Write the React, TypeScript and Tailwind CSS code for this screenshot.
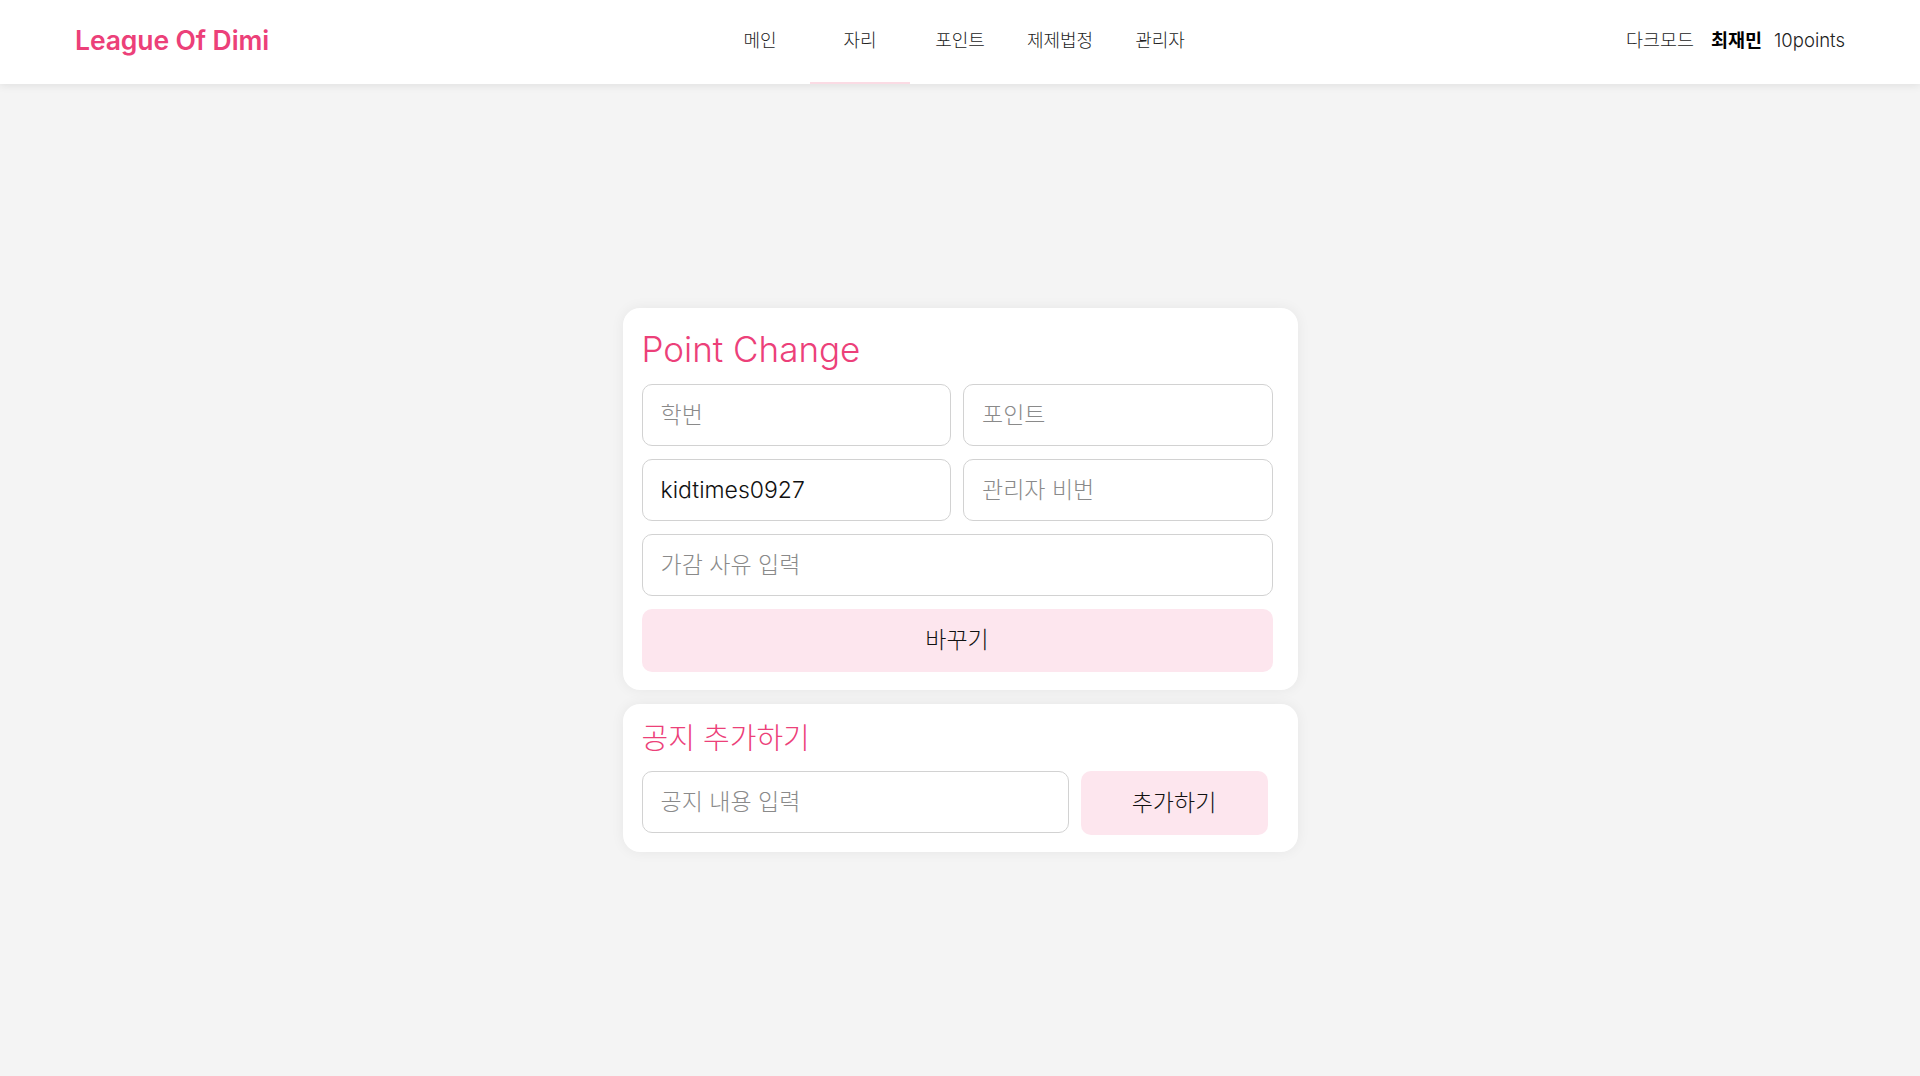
import React from "react";

const font = { fontFamily: 'Inter, "Noto Sans CJK KR", sans-serif' };

function Header() {
  const items = ["메인", "자리", "포인트", "제제법정", "관리자"];
  return (
    <header className="h-[84px] bg-white shadow-[0_2px_8px_rgba(0,0,0,0.08)] grid grid-cols-[1fr_auto_1fr] items-center px-[75px] relative z-10">
      <div className="text-[26.5px] font-semibold text-[#ec4079] tracking-[-0.1px] pb-[3px]">League Of Dimi</div>
      <nav className="flex h-full">
        {items.map((it) => (
          <div
            key={it}
            className={
              "w-[100px] h-full flex items-center justify-center text-[18px] font-light text-[#222] pb-[2px] border-b-2 " +
              (it === "자리" ? "border-[#fbdbe4]" : "border-transparent")
            }
          >
            {it}
          </div>
        ))}
      </nav>
      <div className="flex items-center justify-end text-[18.5px] text-[#222] pb-[3px]">
        <span className="font-light">다크모드</span>
        <span className="ml-[17px] font-bold text-black">최재민</span>
        <span className="ml-[12px] font-light">10points</span>
      </div>
    </header>
  );
}

function Input({ placeholder, value, className }: { placeholder: string; value?: string; className?: string }) {
  return (
    <input
      readOnly
      placeholder={placeholder}
      value={value ?? ""}
      className={
        "h-[62px] rounded-[10px] border border-[#d2d2d2] bg-white px-[18px] text-[23px] font-light text-[#111] placeholder:text-[#8a8a8a] outline-none " +
        (className ?? "")
      }
      style={font}
    />
  );
}

export default function App() {
  return (
    <div className="min-h-[1076px] flex flex-col bg-[#f4f4f4]" style={font}>
      <Header />
      <main className="flex-1 flex flex-col items-center justify-center">
        <div className="w-[675px] bg-white rounded-[17px] shadow-[0_0_14px_rgba(0,0,0,0.06)] pt-[20px] pb-[18px] pl-[19px] pr-[25px]">
          <h1 className="text-[35px] leading-[42px] text-[#ec4079] font-light mb-[14px]">Point Change</h1>
          <div className="grid grid-cols-2 gap-x-[12px] gap-y-[13px]">
            <Input placeholder="학번" />
            <Input placeholder="포인트" />
            <Input placeholder="" value="kidtimes0927" />
            <Input placeholder="관리자 비번" />
            <Input placeholder="가감 사유 입력" className="col-span-2" />
            <button className="col-span-2 h-[63px] rounded-[10px] bg-[#fde6ee] text-[23px] font-light text-[#111]">바꾸기</button>
          </div>
        </div>
        <div className="w-[675px] mt-[14px] bg-white rounded-[17px] shadow-[0_0_14px_rgba(0,0,0,0.06)] pt-[18px] pb-[17px] pl-[19px] pr-[30px]">
          <h2 className="text-[29px] leading-[34px] text-[#ec4079] font-light mb-[15px]">공지 추가하기</h2>
          <div className="flex items-start gap-[12px]">
            <Input placeholder="공지 내용 입력" className="w-[427px]" />
            <button className="w-[187px] h-[64px] rounded-[10px] bg-[#fde6ee] text-[23px] font-light text-[#111]">추가하기</button>
          </div>
        </div>
      </main>
    </div>
  );
}
